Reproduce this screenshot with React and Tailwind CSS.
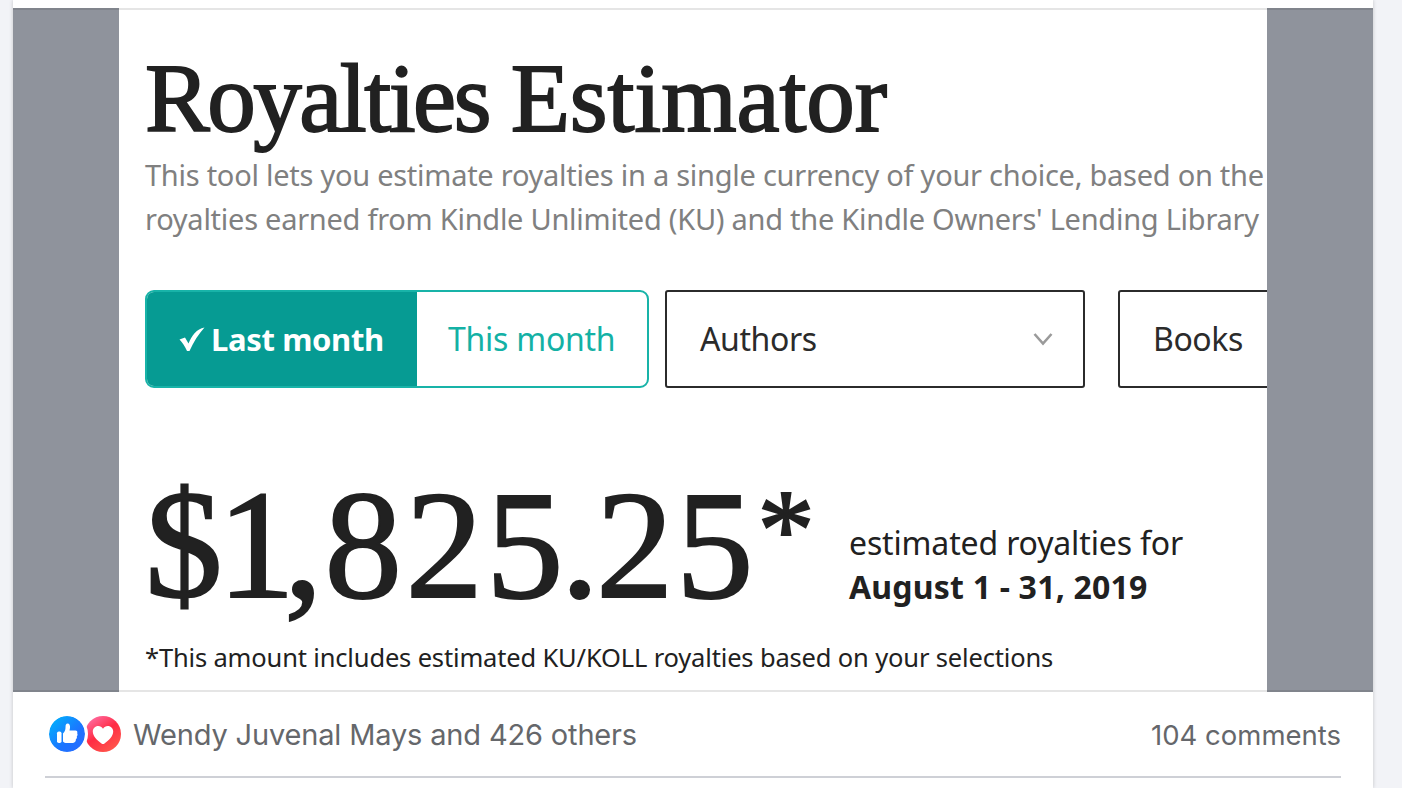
const description = [
  "This tool lets you estimate royalties in a single currency of your choice, based on the",
  "royalties earned from Kindle Unlimited (KU) and the Kindle Owners' Lending Library",
];

const amount = [
  { char: "$", className: "tracking-[-5px]" },
  { char: "1", className: "tracking-[-11px]" },
  { char: ",", className: "tracking-[1.7px]" },
  { char: "8", className: "tracking-[3.5px]" },
  { char: "2", className: "tracking-[3px]" },
  { char: "5", className: "tracking-[-3px]" },
  { char: ".", className: "tracking-[-3.3px]" },
  { char: "2", className: "tracking-[2.5px]" },
  { char: "5", className: "tracking-[4px]" },
  { char: "*", className: "text-[114px] leading-[0] align-[29px]" },
];

function MonthToggle() {
  return (
    <div className="flex w-[504px] h-[98px] shrink-0 -mb-px rounded-[9px] border-2 border-[#18b3a8] overflow-hidden">
      <button className="w-[270px] shrink-0 bg-[#069b93] text-white font-bold flex items-center pl-[32px] text-[31px]">
        <svg viewBox="0 0 26 26" className="w-[26px] h-[26px] mr-[6px] shrink-0" fill="currentColor">
          <path d="M0.500 13.500 6 11.500 9.500 17.500C13 9.500 17.500 3 25.500 1.500 19.500 8 14.500 16 10.500 25H8C6 20.500 3.500 16.500 0.500 13.500Z" />
        </svg>
        <span className="whitespace-nowrap tracking-[-0.35px]">Last month</span>
      </button>
      <button className="pl-[31px] text-[32px] tracking-[-0.25px] text-[#14b1a5] whitespace-nowrap">This month</button>
    </div>
  );
}

function Select({ label, className }) {
  return (
    <div className={`flex items-center justify-between h-[98px] shrink-0 -mb-px border-2 border-[#2b2b2b] rounded-[3px] text-[32px] tracking-[-0.4px] text-[#2b2b2b] pr-[30px] ${className}`}>
      <span>{label}</span>
      <svg viewBox="0 0 20 14" className="w-[20px] h-[14px]" fill="none" stroke="#9a9a9a" strokeWidth="2.6">
        <path d="M1.500 2 10 11.500 18.500 2" />
      </svg>
    </div>
  );
}

function Screenshot() {
  return (
    <div className="w-[1148px] shrink-0 h-full bg-white overflow-hidden pl-[26px] pt-[42px] font-['Noto_Sans',sans-serif]">
      <h1 className="font-['Liberation_Serif',serif] text-[97px] leading-[98px] tracking-[-2.5px] text-[#212121] [-webkit-text-stroke:1.8px_#212121] whitespace-nowrap">
        Royalties <span className="tracking-[-0.1px]">Estimator</span>
      </h1>

      <div className="mt-[5px] text-[29px] leading-[44px] tracking-[-0.26px] text-[#808080] whitespace-nowrap">
        {description.map((line) => (
          <p key={line}>{line}</p>
        ))}
      </div>

      {/* filters */}
      <div className="flex mt-[49px]">
        <MonthToggle />
        <Select label="Authors" className="w-[420px] ml-4 pl-[33px]" />
        <Select label="Books" className="w-[420px] ml-[33px] pl-[33px]" />
      </div>

      {/* amount */}
      <div className="flex mt-[98px] text-[#212121] whitespace-nowrap">
        <div className="w-[704px] h-[120px] shrink-0 font-['Liberation_Serif',serif] text-[155px] leading-[120px] [-webkit-text-stroke:2px_#212121]">
          {amount.map(({ char, className }, i) => (
            <span key={i} className={className}>{char}</span>
          ))}
        </div>
        <div className="mt-[36px] text-[32px] leading-[44px]">
          <p className="tracking-[-0.15px]">estimated royalties for</p>
          <p className="font-bold tracking-[0.2px]">August 1 - 31, 2019</p>
        </div>
      </div>

      <p className="mt-[30px] text-[25.5px] leading-[36px] tracking-[-0.16px] text-[#212121] whitespace-nowrap">
        *This amount includes estimated KU/KOLL royalties based on your selections
      </p>
    </div>
  );
}

function Reactions() {
  return (
    <div className="flex items-center">
      <svg viewBox="0 0 36 36" className="relative z-10 w-9 h-9 rounded-full ring-3 ring-white">
        <defs>
          <linearGradient id="like" x1="0" y1="0" x2="1" y2="1">
            <stop offset="0.1" stopColor="#02adfc" />
            <stop offset="0.6" stopColor="#1c74ff" />
            <stop offset="1" stopColor="#2b6bff" />
          </linearGradient>
        </defs>
        <circle cx="18" cy="18" r="18" fill="url(#like)" />
        <rect x="8" y="15.500" width="4.500" height="11.500" rx="1.800" fill="#fff" />
        <path
          fill="#fff"
          d="M14 17.500C16 15.500 16.500 13.500 16.500 11.500 16.500 8.500 17.200 7.500 18.500 7.500 20.500 7.500 21.300 9.500 21 12L20.500 14.500H26.500C28 14.500 28.800 15.800 28.200 17.200 28.800 18.300 28.600 19.500 27.800 20.300 28.200 21.500 27.800 22.700 26.900 23.300 27 25.800 25.500 27 23.500 27H18C16 27 15 26.500 14 25.500Z"
        />
      </svg>
      <svg viewBox="0 0 36 36" className="w-9 h-9">
        <defs>
          <linearGradient id="love" x1="0.1" y1="0" x2="0.8" y2="1">
            <stop offset="0" stopColor="#ff74ae" />
            <stop offset="0.5" stopColor="#ff2c44" />
            <stop offset="1" stopColor="#ff5a4c" />
          </linearGradient>
        </defs>
        <circle cx="18" cy="18" r="18" fill="url(#love)" />
        <path
          fill="#fff"
          d="M18 12.800C16.800 10.800 15.200 10 13.300 10 10 10 7.800 12.500 7.800 15.500 7.800 20.500 12.500 24.500 16.500 27.500 17.500 28.200 18.500 28.200 19.500 27.500 23.500 24.500 28.200 20.500 28.200 15.500 28.200 12.500 26 10 22.700 10 20.800 10 19.200 10.800 18 12.800Z"
        />
      </svg>
    </div>
  );
}

function App() {
  return (
    <div className="h-screen w-screen overflow-hidden bg-[#f2f3f7]">
      <div className="ml-[13px] w-[1360px] h-full bg-white pt-2 shadow-[0_0_4px_rgba(0,0,0,0.2)]">
        {/* post image */}
        <div className="relative flex justify-center h-[684px] bg-[#8f939c]">
          <Screenshot />
          <div className="absolute inset-0 border-y-2 border-black/10" />
        </div>

        {/* reactions bar */}
        <div className="mx-8 h-[86px] border-b-2 border-[#ced0d6] flex items-center justify-between pl-1 text-[#65676b] whitespace-nowrap font-['Inter',sans-serif]">
          <div className="flex items-center">
            <Reactions />
            <span className="ml-3 pt-[2px] text-[29px] tracking-[-0.16px]">Wendy Juvenal Mays and 426 others</span>
          </div>
          <span className="pt-[4px] text-[27.5px]">104 comments</span>
        </div>
      </div>
    </div>
  );
}

export default App;
